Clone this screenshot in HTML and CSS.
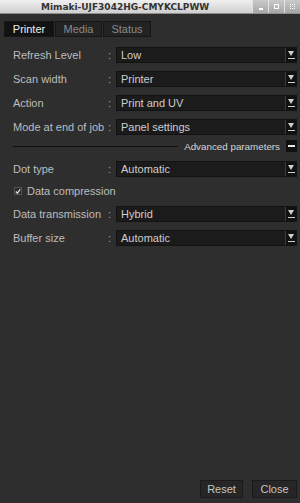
FILE: index.html
```html
<!DOCTYPE html>
<html lang="en">
<head>
    <meta charset="UTF-8">
    <title>Mimaki-UJF3042HG-CMYKCLPWW</title>
    <link rel="stylesheet" href="styles.css">
</head>
<body>
    <!-- Window title bar -->
    <div class="titlebar">
        <span class="title">Mimaki-UJF3042HG-CMYKCLPWW</span>
        <div class="win-buttons">
            <span class="win-btn"><i class="glyph-min"></i></span>
            <span class="win-btn"><i class="glyph-max"></i></span>
            <span class="win-btn"><i class="glyph-close"></i></span>
        </div>
    </div>

    <div class="panel">
        <!-- Tabs -->
        <div class="tabs">
            <span class="tab active">Printer</span>
            <span class="tab">Media</span>
            <span class="tab">Status</span>
        </div>

        <div class="form">
            <div class="row">
                <span class="label">Refresh Level</span>
                <span class="colon">:</span>
                <div class="select"><span>Low</span><i class="arrow"></i></div>
            </div>
            <div class="row">
                <span class="label">Scan width</span>
                <span class="colon">:</span>
                <div class="select"><span>Printer</span><i class="arrow"></i></div>
            </div>
            <div class="row">
                <span class="label">Action</span>
                <span class="colon">:</span>
                <div class="select"><span>Print and UV</span><i class="arrow"></i></div>
            </div>
            <div class="row">
                <span class="label">Mode at end of job</span>
                <span class="colon">:</span>
                <div class="select"><span>Panel settings</span><i class="arrow"></i></div>
            </div>

            <!-- Advanced section -->
            <div class="advanced">
                <span class="adv-line"></span>
                <span class="adv-title">Advanced parameters</span>
                <span class="collapse"></span>
            </div>

            <div class="row">
                <span class="label">Dot type</span>
                <span class="colon">:</span>
                <div class="select"><span>Automatic</span><i class="arrow"></i></div>
            </div>
            <div class="row check-row">
                <span class="checkbox">
                    <svg width="7" height="7" viewBox="0 0 7 7"><path d="M1 3.5 L2.8 5.5 L6 1" fill="none" stroke="#e0e0e0" stroke-width="1.4"/></svg>
                </span>
                <span class="check-label">Data compression</span>
            </div>
            <div class="row">
                <span class="label">Data transmission</span>
                <span class="colon">:</span>
                <div class="select"><span>Hybrid</span><i class="arrow"></i></div>
            </div>
            <div class="row">
                <span class="label">Buffer size</span>
                <span class="colon">:</span>
                <div class="select"><span>Automatic</span><i class="arrow"></i></div>
            </div>
        </div>

        <!-- Bottom buttons -->
        <div class="footer">
            <button class="btn reset">Reset</button>
            <button class="btn close">Close</button>
        </div>
    </div>
</body>
</html>
```

FILE: styles.css
```css
* {
    margin: 0;
    padding: 0;
    box-sizing: border-box;
}

body {
    font-family: 'Liberation Sans', Arial, sans-serif;
    font-size: 11px;
    background-color: #2e2e2e;
    color: #bdbdbd;
    width: 300px;
    height: 503px;
    display: flex;
    flex-direction: column;
    overflow: hidden;
}

/* Title bar */
.titlebar {
    height: 14px;
    background: linear-gradient(#f0f0f0, #cfcfcf);
    border-bottom: 1px solid #8e8e8e;
    display: flex;
    align-items: center;
}

.title {
    font-family: 'DejaVu Sans', sans-serif;
    font-weight: bold;
    font-size: 9px;
    color: #333;
    margin-left: 41px;
}

.win-buttons {
    margin-left: auto;
    display: flex;
    height: 13px;
    align-self: flex-start;
}

.win-btn {
    width: 16px;
    height: 13px;
    background: linear-gradient(#cacaca, #a6a6a6);
    border-left: 1px solid #e2e2e2;
    display: flex;
    align-items: center;
    justify-content: center;
}

.glyph-min {
    width: 4px;
    height: 2px;
    background: #fff;
    margin-top: 4px;
}

.glyph-max {
    width: 5px;
    height: 5px;
    border: 1.5px solid #fff;
}

.glyph-close {
    width: 5px;
    height: 5px;
    border: 1.5px dotted #fff;
}

/* Main panel */
.panel {
    flex: 1;
    display: flex;
    flex-direction: column;
    padding: 0 3px 5px 4px;
}

.tabs {
    display: flex;
    gap: 1px;
    margin-top: 7px;
}

.tab {
    height: 16px;
    line-height: 14px;
    background-color: #232323;
    border: 1px solid #161616;
    color: #8a8a8a;
    text-align: center;
}

.tab:nth-child(1) { width: 50px; }
.tab:nth-child(2) { width: 47px; }
.tab:nth-child(3) { width: 48px; }

.tab.active {
    background-color: #121212;
    color: #eeeeee;
}

.form {
    display: flex;
    flex-direction: column;
    padding-left: 9px;
    margin-top: 10px;
}

.row {
    display: flex;
    align-items: center;
    height: 15px;
    margin-bottom: 9px;
}

.label {
    width: 95px;
    white-space: nowrap;
}

.colon {
    width: 8px;
    color: #a0a0a0;
}

.select {
    flex: 1;
    height: 16px;
    background-color: #1b1b1b;
    border: 1px solid #121212;
    display: flex;
    align-items: center;
    padding-left: 4px;
    color: #cdcdcd;
}

.select span {
    flex: 1;
}

/* dropdown arrow: triangle with a bar under it */
.arrow {
    width: 11px;
    height: 14px;
    background-color: #111;
    border-left: 1px solid #3a3a3a;
    position: relative;
}

.arrow::before {
    content: "";
    position: absolute;
    left: 2px;
    top: 3px;
    border-left: 3.5px solid transparent;
    border-right: 3.5px solid transparent;
    border-top: 5px solid #cfcfcf;
}

.arrow::after {
    content: "";
    position: absolute;
    left: 2px;
    top: 10px;
    width: 7px;
    height: 1px;
    background: #cfcfcf;
}

/* Advanced parameters header */
.advanced {
    display: flex;
    align-items: center;
    height: 12px;
    margin: -3px 0 9px 0;
}

.adv-line {
    flex: 1;
    height: 1px;
    background-color: #0e0e0e;
    margin-right: 6px;
}

.adv-title {
    color: #d4d4d4;
    font-size: 9.8px;
    margin-right: 6px;
}

.collapse {
    width: 11px;
    height: 12px;
    background-color: #101010;
    position: relative;
}

.collapse::after {
    content: "";
    position: absolute;
    left: 2px;
    top: 5px;
    width: 7px;
    height: 2px;
    background: #e6e6e6;
}

.check-row {
    height: 12px;
}

.checkbox {
    width: 8px;
    height: 8px;
    background-color: #2a2a2a;
    border: 1px solid #555;
    display: flex;
    align-items: center;
    justify-content: center;
    margin: 0 5px 0 1px;
}

.footer {
    margin-top: auto;
    display: flex;
    justify-content: flex-end;
    gap: 9px;
}

.btn {
    font-family: 'Liberation Sans', Arial, sans-serif;
    font-size: 11px;
    height: 18px;
    background-color: #262626;
    border: 1px solid #1a1a1a;
    color: #c4c4c4;
}

.btn.reset { width: 43px; }
.btn.close { width: 45px; }
```
